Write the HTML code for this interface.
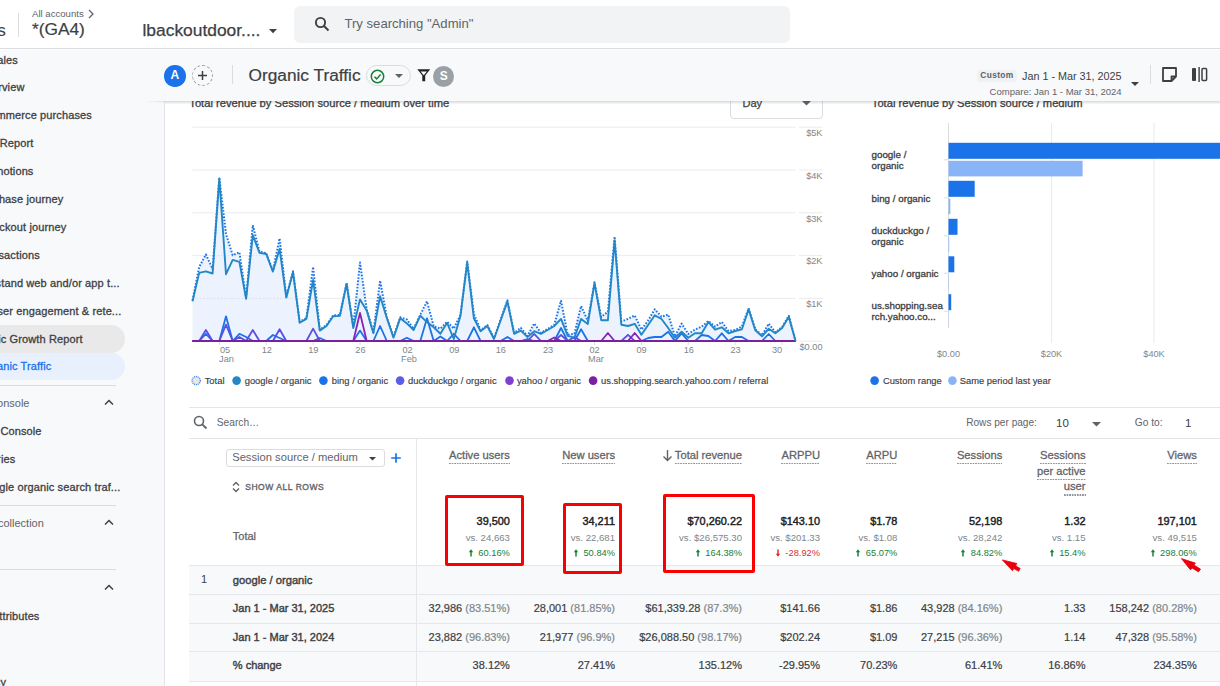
<!DOCTYPE html>
<html><head><meta charset="utf-8"><title>GA4 Organic Traffic</title><style>
*{margin:0;padding:0;box-sizing:border-box}
body{width:1220px;height:686px;overflow:hidden;background:#fff;font-family:"Liberation Sans",sans-serif;color:#3c4043;position:relative}
.a{position:absolute;white-space:nowrap}
.r{text-align:right}
</style></head>
<body>
<div class="a" style="left:0;top:0;width:1220px;height:49px;background:#fff;border-bottom:1px solid #dadce0"></div>
<div class="a" style="right:1214.2px;top:17.5px;font-size:17.3px;line-height:24px;color:#3c4043;font-weight:400;">Analytics</div>
<div class="a" style="left:18px;top:13px;width:1px;height:24px;background:#dadce0"></div>
<div class="a" style="left:32px;top:7.0px;font-size:9.6px;line-height:13px;color:#5f6368;font-weight:400;">All accounts</div>
<svg class="a" style="left:87px;top:9px" width="8" height="10" viewBox="0 0 8 10"><path d="M2 1 L6 5 L2 9" fill="none" stroke="#5f6368" stroke-width="1.3"/></svg>
<div class="a" style="left:32px;top:17.3px;font-size:17.3px;line-height:24px;color:#3c4043;font-weight:400;-webkit-text-stroke-width:0.2px">*(GA4)</div>
<div class="a" style="left:142.5px;top:17.8px;font-size:17.4px;line-height:24px;color:#3c4043;font-weight:400;-webkit-text-stroke-width:0.25px">lbackoutdoor....</div>
<svg class="a" style="left:268.5px;top:29.2px" width="8" height="5" viewBox="0 0 8 5"><path d="M0 0 L8 0 L4 4.3 Z" fill="#3c4043"/></svg>
<div class="a" style="left:294px;top:6px;width:496px;height:37px;background:#f1f3f4;border-radius:6px"></div>
<svg class="a" style="left:314px;top:16px" width="16" height="16" viewBox="0 0 16 16"><circle cx="6.5" cy="6.5" r="4.6" fill="none" stroke="#3c4043" stroke-width="1.9"/><path d="M10 10 L14.5 14.5" stroke="#3c4043" stroke-width="2"/></svg>
<div class="a" style="left:344.5px;top:14.5px;font-size:13.1px;line-height:18px;color:#5f6368;font-weight:400;">Try searching "Admin"</div>
<div class="a" style="left:0;top:50px;width:165px;height:636px;background:#f8f9fa"></div><div class="a" style="left:164px;top:101px;width:1px;height:585px;background:#e3e5e8"></div>
<div class="a" style="left:-40px;top:325px;width:165px;height:27.5px;background:#e9e9ea;border-radius:0 14px 14px 0"></div>
<div class="a" style="left:-40px;top:352.5px;width:165px;height:27.5px;background:#e8f0fe;border-radius:0 14px 14px 0"></div>
<div class="a" style="left:0;top:50px;width:164px;height:636px;overflow:hidden"><div class="a" style="left:0;top:-50px;width:1220px;height:686px"><div class="a" style="right:1202.1px;top:52.8px;font-size:11px;line-height:15px;color:#3c4043;font-weight:400;-webkit-text-stroke-width:0.3px;letter-spacing:0.12px">Ecommerce sales</div><div class="a" style="right:1195.5px;top:80.2px;font-size:11px;line-height:15px;color:#3c4043;font-weight:400;-webkit-text-stroke-width:0.3px;letter-spacing:0.12px">Overview</div><div class="a" style="right:1128.1px;top:108.0px;font-size:11px;line-height:15px;color:#3c4043;font-weight:400;-webkit-text-stroke-width:0.3px;letter-spacing:0.12px">Ecommerce purchases</div><div class="a" style="right:1186.5px;top:136.0px;font-size:11px;line-height:15px;color:#3c4043;font-weight:400;-webkit-text-stroke-width:0.3px;letter-spacing:0.12px">Item Report</div><div class="a" style="right:1186.5px;top:164.0px;font-size:11px;line-height:15px;color:#3c4043;font-weight:400;-webkit-text-stroke-width:0.3px;letter-spacing:0.12px">Promotions</div><div class="a" style="right:1156.7px;top:192.1px;font-size:11px;line-height:15px;color:#3c4043;font-weight:400;-webkit-text-stroke-width:0.3px;letter-spacing:0.12px">Purchase journey</div><div class="a" style="right:1153.7px;top:219.9px;font-size:11px;line-height:15px;color:#3c4043;font-weight:400;-webkit-text-stroke-width:0.3px;letter-spacing:0.12px">Checkout journey</div><div class="a" style="right:1180.2px;top:247.7px;font-size:11px;line-height:15px;color:#3c4043;font-weight:400;-webkit-text-stroke-width:0.3px;letter-spacing:0.12px">Transactions</div><div class="a" style="right:1100.3px;top:275.7px;font-size:11px;line-height:15px;color:#3c4043;font-weight:400;-webkit-text-stroke-width:0.3px;letter-spacing:0.12px">Understand web and/or app t...</div><div class="a" style="right:1098.6px;top:303.7px;font-size:11px;line-height:15px;color:#3c4043;font-weight:400;-webkit-text-stroke-width:0.3px;letter-spacing:0.12px">Understand user engagement &amp; rete...</div><div class="a" style="right:1137.3px;top:331.7px;font-size:11px;line-height:15px;color:#3c4043;font-weight:400;-webkit-text-stroke-width:0.3px;letter-spacing:0.12px">Organic Growth Report</div><div class="a" style="right:1168.6px;top:359.1px;font-size:11px;line-height:15px;color:#1a73e8;font-weight:400;-webkit-text-stroke-width:0.3px;letter-spacing:0.12px">Organic Traffic</div><div class="a" style="right:1178.4px;top:423.6px;font-size:11px;line-height:15px;color:#3c4043;font-weight:400;-webkit-text-stroke-width:0.3px;letter-spacing:0.12px">Search Console</div><div class="a" style="right:1204.7px;top:451.8px;font-size:11px;line-height:15px;color:#3c4043;font-weight:400;-webkit-text-stroke-width:0.3px;letter-spacing:0.12px">Queries</div><div class="a" style="right:1099.6px;top:479.5px;font-size:11px;line-height:15px;color:#3c4043;font-weight:400;-webkit-text-stroke-width:0.3px;letter-spacing:0.12px">Google organic search traf...</div><div class="a" style="right:1180.5px;top:608.5px;font-size:11px;line-height:15px;color:#3c4043;font-weight:400;-webkit-text-stroke-width:0.3px;letter-spacing:0.12px">Attributes</div><div class="a" style="right:1214.0px;top:674.5px;font-size:11px;line-height:15px;color:#3c4043;font-weight:400;-webkit-text-stroke-width:0.3px;letter-spacing:0.12px">Privacy</div><div class="a" style="right:1190.5px;top:395.8px;font-size:11px;line-height:15px;color:#5f6368;font-weight:400;">Search Console</div><div class="a" style="right:1176.2px;top:515.7px;font-size:11px;line-height:15px;color:#5f6368;font-weight:400;">Data collection</div></div></div>
<div class="a" style="left:0;top:384.5px;width:115.5px;height:1px;background:#dadce0"></div>
<div class="a" style="left:0;top:504.5px;width:115.5px;height:1px;background:#dadce0"></div>
<div class="a" style="left:0;top:569.0px;width:115.5px;height:1px;background:#dadce0"></div>
<svg class="a" style="left:104px;top:399.3px" width="10" height="7" viewBox="0 0 10 7"><path d="M1 5.5 L5 1.5 L9 5.5" fill="none" stroke="#3c4043" stroke-width="1.5"/></svg>
<svg class="a" style="left:104px;top:519.2px" width="10" height="7" viewBox="0 0 10 7"><path d="M1 5.5 L5 1.5 L9 5.5" fill="none" stroke="#3c4043" stroke-width="1.5"/></svg>
<svg class="a" style="left:104px;top:583.5px" width="10" height="7" viewBox="0 0 10 7"><path d="M1 5.5 L5 1.5 L9 5.5" fill="none" stroke="#3c4043" stroke-width="1.5"/></svg>
<div class="a" style="left:189.3px;top:95.2px;font-size:11.2px;line-height:16px;color:#3c4043;font-weight:400;-webkit-text-stroke-width:0.3px">Total revenue by Session source / medium over time</div>
<div class="a" style="left:871.8px;top:95.2px;font-size:11.2px;line-height:16px;color:#3c4043;font-weight:400;-webkit-text-stroke-width:0.3px">Total revenue by Session source / medium</div>
<div class="a" style="left:730px;top:88px;width:92.5px;height:30.5px;border:1px solid #dadce0;border-radius:4px;background:#fff"></div>
<div class="a" style="left:742.5px;top:95.8px;font-size:11px;line-height:15px;color:#3c4043;font-weight:400;-webkit-text-stroke-width:0.25px">Day</div>
<svg class="a" style="left:802px;top:101px" width="9" height="5" viewBox="0 0 9 5"><path d="M0 0 L9 0 L4.5 4.5 Z" fill="#5f6368"/></svg>
<svg class="a" style="left:0;top:0" width="1220" height="686" viewBox="0 0 1220 686"><line x1="799" y1="127.2" x2="822.5" y2="127.2" stroke="#ebebeb" stroke-width="1"/><line x1="192.5" y1="127.2" x2="795.5" y2="127.2" stroke="#ebebeb" stroke-width="1"/><line x1="799" y1="170" x2="822.5" y2="170" stroke="#ebebeb" stroke-width="1"/><line x1="192.5" y1="170" x2="795.5" y2="170" stroke="#ebebeb" stroke-width="1"/><line x1="799" y1="212.8" x2="822.5" y2="212.8" stroke="#ebebeb" stroke-width="1"/><line x1="192.5" y1="212.8" x2="795.5" y2="212.8" stroke="#ebebeb" stroke-width="1"/><line x1="799" y1="255.6" x2="822.5" y2="255.6" stroke="#ebebeb" stroke-width="1"/><line x1="192.5" y1="255.6" x2="795.5" y2="255.6" stroke="#ebebeb" stroke-width="1"/><line x1="799" y1="298.4" x2="822.5" y2="298.4" stroke="#ebebeb" stroke-width="1"/><line x1="192.5" y1="298.4" x2="795.5" y2="298.4" stroke="#ebebeb" stroke-width="1"/><line x1="799" y1="341.2" x2="822.5" y2="341.2" stroke="#ebebeb" stroke-width="1"/><polygon points="192.5,341.0 192.5,300.4 199.2,267.0 205.9,254.5 212.6,269.0 219.3,177.5 226.0,234.0 232.7,255.3 239.4,252.2 246.1,297.8 252.8,225.2 259.5,251.8 266.2,253.0 272.9,270.6 279.6,238.4 286.3,296.5 293.0,271.2 299.7,321.8 306.4,317.9 313.1,267.0 319.8,329.6 326.5,325.0 333.2,315.3 339.9,314.9 346.6,282.9 353.3,327.0 360.0,262.5 366.7,309.5 373.4,332.2 380.1,280.6 386.8,317.0 393.5,336.7 400.2,317.3 406.9,319.5 413.6,329.0 420.3,314.7 427.0,301.4 433.7,326.3 440.4,328.6 447.1,321.8 453.8,328.6 460.5,314.7 467.2,261.5 473.9,314.0 480.6,330.2 487.3,325.0 494.0,338.0 500.7,319.2 507.4,300.4 514.1,332.8 520.8,327.9 527.5,336.0 534.2,323.4 540.9,332.8 547.6,329.0 554.3,324.7 561.0,300.7 567.7,334.8 574.4,333.8 581.1,306.0 587.8,320.9 594.5,282.2 601.2,317.0 607.9,311.8 614.6,236.6 621.3,321.5 628.0,318.9 634.7,315.5 641.4,329.6 648.1,320.6 654.8,309.3 661.5,316.8 668.2,314.6 674.9,336.3 681.6,323.6 688.3,334.0 695.0,329.6 701.7,326.6 708.4,321.0 715.1,326.6 721.8,322.0 728.5,331.0 735.2,330.0 741.9,326.6 748.6,308.3 755.3,329.3 762.0,335.3 768.7,323.6 775.4,332.3 782.1,327.0 788.8,315.8 795.5,340.8 795.5,341.0" fill="#ecf3fe"/><clipPath id="fc"><polygon points="192.5,341.0 192.5,300.4 199.2,267.0 205.9,254.5 212.6,269.0 219.3,177.5 226.0,234.0 232.7,255.3 239.4,252.2 246.1,297.8 252.8,225.2 259.5,251.8 266.2,253.0 272.9,270.6 279.6,238.4 286.3,296.5 293.0,271.2 299.7,321.8 306.4,317.9 313.1,267.0 319.8,329.6 326.5,325.0 333.2,315.3 339.9,314.9 346.6,282.9 353.3,327.0 360.0,262.5 366.7,309.5 373.4,332.2 380.1,280.6 386.8,317.0 393.5,336.7 400.2,317.3 406.9,319.5 413.6,329.0 420.3,314.7 427.0,301.4 433.7,326.3 440.4,328.6 447.1,321.8 453.8,328.6 460.5,314.7 467.2,261.5 473.9,314.0 480.6,330.2 487.3,325.0 494.0,338.0 500.7,319.2 507.4,300.4 514.1,332.8 520.8,327.9 527.5,336.0 534.2,323.4 540.9,332.8 547.6,329.0 554.3,324.7 561.0,300.7 567.7,334.8 574.4,333.8 581.1,306.0 587.8,320.9 594.5,282.2 601.2,317.0 607.9,311.8 614.6,236.6 621.3,321.5 628.0,318.9 634.7,315.5 641.4,329.6 648.1,320.6 654.8,309.3 661.5,316.8 668.2,314.6 674.9,336.3 681.6,323.6 688.3,334.0 695.0,329.6 701.7,326.6 708.4,321.0 715.1,326.6 721.8,322.0 728.5,331.0 735.2,330.0 741.9,326.6 748.6,308.3 755.3,329.3 762.0,335.3 768.7,323.6 775.4,332.3 782.1,327.0 788.8,315.8 795.5,340.8 795.5,341.0"/></clipPath><g clip-path="url(#fc)"><line x1="192.5" y1="127.2" x2="795.5" y2="127.2" stroke="#d5d9e0" stroke-width="1" opacity="0.7" stroke-dasharray="2 1.5"/><line x1="192.5" y1="170" x2="795.5" y2="170" stroke="#d5d9e0" stroke-width="1" opacity="0.7" stroke-dasharray="2 1.5"/><line x1="192.5" y1="212.8" x2="795.5" y2="212.8" stroke="#d5d9e0" stroke-width="1" opacity="0.7" stroke-dasharray="2 1.5"/><line x1="192.5" y1="255.6" x2="795.5" y2="255.6" stroke="#d5d9e0" stroke-width="1" opacity="0.7" stroke-dasharray="2 1.5"/><line x1="192.5" y1="298.4" x2="795.5" y2="298.4" stroke="#d5d9e0" stroke-width="1" opacity="0.7" stroke-dasharray="2 1.5"/></g><polyline points="192.5,341.0 199.2,341.0 205.9,333.8 212.6,341.0 219.3,341.0 226.0,316.3 232.7,341.0 239.4,333.8 246.1,337.0 252.8,341.0 259.5,341.0 266.2,341.0 272.9,335.0 279.6,338.0 286.3,341.0 293.0,341.0 299.7,341.0 306.4,341.0 313.1,341.0 319.8,338.0 326.5,341.0 333.2,341.0 339.9,341.0 346.6,341.0 353.3,341.0 360.0,330.6 366.7,341.0 373.4,341.0 380.1,326.0 386.8,341.0 393.5,341.0 400.2,341.0 406.9,337.7 413.6,341.0 420.3,341.0 427.0,318.3 433.7,341.0 440.4,336.4 447.1,341.0 453.8,333.8 460.5,341.0 467.2,341.0 473.9,327.3 480.6,341.0 487.3,341.0 494.0,341.0 500.7,341.0 507.4,337.0 514.1,341.0 520.8,341.0 527.5,339.0 534.2,341.0 540.9,341.0 547.6,341.0 554.3,341.0 561.0,328.0 567.7,341.0 574.4,341.0 581.1,329.3 587.8,341.0 594.5,341.0 601.2,341.0 607.9,341.0 614.6,341.0 621.3,341.0 628.0,341.0 634.7,341.0 641.4,341.0 648.1,338.0 654.8,337.0 661.5,337.0 668.2,331.8 674.9,341.0 681.6,333.3 688.3,341.0 695.0,341.0 701.7,335.0 708.4,336.0 715.1,341.0 721.8,333.3 728.5,341.0 735.2,337.0 741.9,337.0 748.6,341.0 755.3,341.0 762.0,341.0 768.7,334.0 775.4,341.0 782.1,341.0 788.8,341.0 795.5,341.0" fill="none" stroke="#1a73e8" stroke-width="1.8" stroke-linejoin="round"/><polyline points="192.5,341.0 199.2,341.0 205.9,330.0 212.6,341.0 219.3,341.0 226.0,324.7 232.7,341.0 239.4,337.0 246.1,341.0 252.8,330.0 259.5,341.0 266.2,341.0 272.9,341.0 279.6,329.3 286.3,341.0 293.0,341.0 299.7,341.0 306.4,341.0 313.1,328.6 319.8,341.0 326.5,341.0 333.2,341.0 339.9,341.0 346.6,341.0 353.3,341.0 360.0,341.0 366.7,341.0 373.4,341.0 380.1,341.0 386.8,341.0 393.5,341.0 400.2,341.0 406.9,341.0 413.6,341.0 420.3,341.0 427.0,341.0 433.7,341.0 440.4,341.0 447.1,341.0 453.8,341.0 460.5,341.0 467.2,341.0 473.9,341.0 480.6,341.0 487.3,341.0 494.0,341.0 500.7,341.0 507.4,341.0 514.1,341.0 520.8,341.0 527.5,341.0 534.2,333.8 540.9,341.0 547.6,341.0 554.3,341.0 561.0,335.0 567.7,341.0 574.4,337.0 581.1,341.0 587.8,341.0 594.5,341.0 601.2,341.0 607.9,341.0 614.6,341.0 621.3,341.0 628.0,334.8 634.7,341.0 641.4,341.0 648.1,341.0 654.8,341.0 661.5,341.0 668.2,341.0 674.9,341.0 681.6,341.0 688.3,341.0 695.0,341.0 701.7,341.0 708.4,341.0 715.1,341.0 721.8,341.0 728.5,341.0 735.2,341.0 741.9,341.0 748.6,341.0 755.3,341.0 762.0,341.0 768.7,341.0 775.4,341.0 782.1,341.0 788.8,341.0 795.5,341.0" fill="none" stroke="#5b4fe3" stroke-width="1.8" stroke-linejoin="round"/><polyline points="192.5,341.0 199.2,341.0 205.9,341.0 212.6,341.0 219.3,341.0 226.0,341.0 232.7,341.0 239.4,341.0 246.1,341.0 252.8,341.0 259.5,341.0 266.2,341.0 272.9,341.0 279.6,341.0 286.3,341.0 293.0,341.0 299.7,341.0 306.4,341.0 313.1,341.0 319.8,341.0 326.5,341.0 333.2,341.0 339.9,341.0 346.6,341.0 353.3,341.0 360.0,313.0 366.7,341.0 373.4,341.0 380.1,341.0 386.8,341.0 393.5,341.0 400.2,341.0 406.9,341.0 413.6,341.0 420.3,341.0 427.0,341.0 433.7,341.0 440.4,341.0 447.1,341.0 453.8,341.0 460.5,341.0 467.2,341.0 473.9,341.0 480.6,341.0 487.3,341.0 494.0,341.0 500.7,341.0 507.4,341.0 514.1,341.0 520.8,341.0 527.5,341.0 534.2,341.0 540.9,341.0 547.6,341.0 554.3,337.5 561.0,341.0 567.7,341.0 574.4,341.0 581.1,341.0 587.8,341.0 594.5,341.0 601.2,341.0 607.9,333.0 614.6,341.0 621.3,341.0 628.0,341.0 634.7,333.0 641.4,341.0 648.1,341.0 654.8,341.0 661.5,341.0 668.2,341.0 674.9,341.0 681.6,341.0 688.3,341.0 695.0,341.0 701.7,341.0 708.4,341.0 715.1,341.0 721.8,341.0 728.5,341.0 735.2,341.0 741.9,341.0 748.6,341.0 755.3,341.0 762.0,341.0 768.7,341.0 775.4,341.0 782.1,341.0 788.8,341.0 795.5,341.0" fill="none" stroke="#8a22b5" stroke-width="1.8" stroke-linejoin="round"/><line x1="192.5" y1="341.0" x2="795.5" y2="341.0" stroke="#7b1fa2" stroke-width="2"/><polyline points="192.5,300.4 199.2,267.0 205.9,254.5 212.6,269.0 219.3,177.5 226.0,234.0 232.7,255.3 239.4,252.2 246.1,297.8 252.8,225.2 259.5,251.8 266.2,253.0 272.9,270.6 279.6,238.4 286.3,296.5 293.0,271.2 299.7,321.8 306.4,317.9 313.1,267.0 319.8,329.6 326.5,325.0 333.2,315.3 339.9,314.9 346.6,282.9 353.3,327.0 360.0,262.5 366.7,309.5 373.4,332.2 380.1,280.6 386.8,317.0 393.5,336.7 400.2,317.3 406.9,319.5 413.6,329.0 420.3,314.7 427.0,301.4 433.7,326.3 440.4,328.6 447.1,321.8 453.8,328.6 460.5,314.7 467.2,261.5 473.9,314.0 480.6,330.2 487.3,325.0 494.0,338.0 500.7,319.2 507.4,300.4 514.1,332.8 520.8,327.9 527.5,336.0 534.2,323.4 540.9,332.8 547.6,329.0 554.3,324.7 561.0,300.7 567.7,334.8 574.4,333.8 581.1,306.0 587.8,320.9 594.5,282.2 601.2,317.0 607.9,311.8 614.6,236.6 621.3,321.5 628.0,318.9 634.7,315.5 641.4,329.6 648.1,320.6 654.8,309.3 661.5,316.8 668.2,314.6 674.9,336.3 681.6,323.6 688.3,334.0 695.0,329.6 701.7,326.6 708.4,321.0 715.1,326.6 721.8,322.0 728.5,331.0 735.2,330.0 741.9,326.6 748.6,308.3 755.3,329.3 762.0,335.3 768.7,323.6 775.4,332.3 782.1,327.0 788.8,315.8 795.5,340.8" fill="none" stroke="#1a73e8" stroke-width="2" stroke-dasharray="1.6 1.6" stroke-linejoin="round"/><polyline points="192.5,301.4 199.2,272.9 205.9,271.3 212.6,273.5 219.3,178.5 226.0,274.2 232.7,259.9 239.4,261.8 246.1,298.8 252.8,235.2 259.5,252.8 266.2,254.0 272.9,271.6 279.6,249.0 286.3,297.5 293.0,272.2 299.7,322.8 306.4,318.9 313.1,280.0 319.8,330.6 326.5,326.0 333.2,316.3 339.9,315.9 346.6,283.9 353.3,328.0 360.0,299.4 366.7,310.5 373.4,333.2 380.1,296.2 386.8,318.0 393.5,337.7 400.2,318.3 406.9,323.4 413.6,330.0 420.3,315.7 427.0,322.1 433.7,327.3 440.4,333.8 447.1,322.8 453.8,339.0 460.5,315.7 467.2,262.5 473.9,318.3 480.6,331.2 487.3,326.0 494.0,339.0 500.7,320.2 507.4,301.4 514.1,333.8 520.8,330.6 527.5,337.0 534.2,331.2 540.9,333.8 547.6,330.0 554.3,326.0 561.0,318.9 567.7,335.8 574.4,337.7 581.1,318.9 587.8,324.1 594.5,283.2 601.2,320.2 607.9,320.2 614.6,240.5 621.3,324.7 628.0,326.0 634.7,323.8 641.4,334.8 648.1,325.0 654.8,315.3 661.5,319.0 668.2,328.0 674.9,337.8 681.6,331.8 688.3,337.8 695.0,333.3 701.7,333.3 708.4,322.0 715.1,329.6 721.8,327.3 728.5,333.3 735.2,331.0 741.9,329.3 748.6,309.3 755.3,330.3 762.0,336.3 768.7,328.8 775.4,333.3 782.1,328.0 788.8,316.8 795.5,340.8" fill="none" stroke="#2387c5" stroke-width="1.9" stroke-linejoin="round"/><line x1="219.3" y1="342" x2="219.3" y2="345" stroke="#dadce0" stroke-width="1"/><line x1="266.2" y1="342" x2="266.2" y2="345" stroke="#dadce0" stroke-width="1"/><line x1="313.1" y1="342" x2="313.1" y2="345" stroke="#dadce0" stroke-width="1"/><line x1="360.0" y1="342" x2="360.0" y2="345" stroke="#dadce0" stroke-width="1"/><line x1="406.9" y1="342" x2="406.9" y2="345" stroke="#dadce0" stroke-width="1"/><line x1="453.8" y1="342" x2="453.8" y2="345" stroke="#dadce0" stroke-width="1"/><line x1="500.7" y1="342" x2="500.7" y2="345" stroke="#dadce0" stroke-width="1"/><line x1="547.6" y1="342" x2="547.6" y2="345" stroke="#dadce0" stroke-width="1"/><line x1="594.5" y1="342" x2="594.5" y2="345" stroke="#dadce0" stroke-width="1"/><line x1="641.4" y1="342" x2="641.4" y2="345" stroke="#dadce0" stroke-width="1"/><line x1="688.3" y1="342" x2="688.3" y2="345" stroke="#dadce0" stroke-width="1"/><line x1="735.2" y1="342" x2="735.2" y2="345" stroke="#dadce0" stroke-width="1"/><line x1="782.1" y1="342" x2="782.1" y2="345" stroke="#dadce0" stroke-width="1"/><line x1="948.5" y1="123" x2="948.5" y2="328" stroke="#dadce0" stroke-width="1"/><line x1="1051.5" y1="123" x2="1051.5" y2="343" stroke="#e8eaed" stroke-width="1"/><line x1="1154" y1="123" x2="1154" y2="343" stroke="#e8eaed" stroke-width="1"/><rect x="948.5" y="142.8" width="281.5" height="16" fill="#1a73e8"/><rect x="948.5" y="160.8" width="134.1" height="15.6" fill="#8ab4f8"/><line x1="944" y1="159.8" x2="948.5" y2="159.8" stroke="#dadce0" stroke-width="1"/><rect x="948.5" y="180.8" width="26.2" height="16" fill="#1a73e8"/><rect x="948.5" y="198.6" width="1.8" height="15.6" fill="#8ab4f8"/><line x1="944" y1="197.8" x2="948.5" y2="197.8" stroke="#dadce0" stroke-width="1"/><rect x="948.5" y="218.8" width="9.0" height="16" fill="#1a73e8"/><rect x="948.5" y="236.6" width="0.7" height="15.6" fill="#8ab4f8"/><line x1="944" y1="235.8" x2="948.5" y2="235.8" stroke="#dadce0" stroke-width="1"/><rect x="948.5" y="256.3" width="5.8" height="16" fill="#1a73e8"/><rect x="948.5" y="274.3" width="0.4" height="15.6" fill="#8ab4f8"/><line x1="944" y1="273.3" x2="948.5" y2="273.3" stroke="#dadce0" stroke-width="1"/><rect x="948.5" y="294.2" width="2.7" height="16" fill="#1a73e8"/><rect x="948.5" y="312.2" width="0.2" height="15.6" fill="#8ab4f8"/><line x1="944" y1="311.2" x2="948.5" y2="311.2" stroke="#dadce0" stroke-width="1"/><circle cx="196.2" cy="380.6" r="4.1" fill="#e6e7e9" stroke="#3d84ec" stroke-width="1.3" stroke-dasharray="1 0.85"/><circle cx="236.6" cy="380.6" r="4.3" fill="#2387c5"/><circle cx="323.4" cy="380.6" r="4.3" fill="#1a73e8"/><circle cx="400.1" cy="380.6" r="4.3" fill="#5c5ce6"/><circle cx="509.5" cy="380.6" r="4.3" fill="#7f3fd0"/><circle cx="593.1" cy="380.6" r="4.3" fill="#7b1fa2"/><circle cx="874.6" cy="380.6" r="4.3" fill="#1a73e8"/><circle cx="952.4" cy="380.6" r="4.3" fill="#8ab4f8"/></svg>
<div class="a" style="right:397.5px;top:127.0px;font-size:9.2px;line-height:13px;color:#80868b;font-weight:400;">$5K</div>
<div class="a" style="right:397.5px;top:169.8px;font-size:9.2px;line-height:13px;color:#80868b;font-weight:400;">$4K</div>
<div class="a" style="right:397.5px;top:212.6px;font-size:9.2px;line-height:13px;color:#80868b;font-weight:400;">$3K</div>
<div class="a" style="right:397.5px;top:255.4px;font-size:9.2px;line-height:13px;color:#80868b;font-weight:400;">$2K</div>
<div class="a" style="right:397.5px;top:298.2px;font-size:9.2px;line-height:13px;color:#80868b;font-weight:400;">$1K</div>
<div class="a" style="right:397.5px;top:340.5px;font-size:9.2px;line-height:13px;color:#80868b;font-weight:400;">$0.00</div>
<div class="a" style="left:125.0px;width:200px;text-align:center;top:343.7px;font-size:9.2px;line-height:13px;color:#80868b;font-weight:400;">05</div>
<div class="a" style="left:126.5px;width:200px;text-align:center;top:353.0px;font-size:9.2px;line-height:13px;color:#80868b;font-weight:400;">Jan</div>
<div class="a" style="left:166.8px;width:200px;text-align:center;top:343.7px;font-size:9.2px;line-height:13px;color:#80868b;font-weight:400;">12</div>
<div class="a" style="left:213.3px;width:200px;text-align:center;top:343.7px;font-size:9.2px;line-height:13px;color:#80868b;font-weight:400;">19</div>
<div class="a" style="left:260.4px;width:200px;text-align:center;top:343.7px;font-size:9.2px;line-height:13px;color:#80868b;font-weight:400;">26</div>
<div class="a" style="left:307.5px;width:200px;text-align:center;top:343.7px;font-size:9.2px;line-height:13px;color:#80868b;font-weight:400;">02</div>
<div class="a" style="left:309.0px;width:200px;text-align:center;top:353.0px;font-size:9.2px;line-height:13px;color:#80868b;font-weight:400;">Feb</div>
<div class="a" style="left:354.3px;width:200px;text-align:center;top:343.7px;font-size:9.2px;line-height:13px;color:#80868b;font-weight:400;">09</div>
<div class="a" style="left:400.8px;width:200px;text-align:center;top:343.7px;font-size:9.2px;line-height:13px;color:#80868b;font-weight:400;">16</div>
<div class="a" style="left:448.0px;width:200px;text-align:center;top:343.7px;font-size:9.2px;line-height:13px;color:#80868b;font-weight:400;">23</div>
<div class="a" style="left:494.5px;width:200px;text-align:center;top:343.7px;font-size:9.2px;line-height:13px;color:#80868b;font-weight:400;">02</div>
<div class="a" style="left:496.0px;width:200px;text-align:center;top:353.0px;font-size:9.2px;line-height:13px;color:#80868b;font-weight:400;">Mar</div>
<div class="a" style="left:541.5px;width:200px;text-align:center;top:343.7px;font-size:9.2px;line-height:13px;color:#80868b;font-weight:400;">09</div>
<div class="a" style="left:588.8px;width:200px;text-align:center;top:343.7px;font-size:9.2px;line-height:13px;color:#80868b;font-weight:400;">16</div>
<div class="a" style="left:635.6px;width:200px;text-align:center;top:343.7px;font-size:9.2px;line-height:13px;color:#80868b;font-weight:400;">23</div>
<div class="a" style="left:677.0px;width:200px;text-align:center;top:343.7px;font-size:9.2px;line-height:13px;color:#80868b;font-weight:400;">30</div>
<div class="a" style="left:204.7px;top:374.1px;font-size:9.4px;line-height:13px;color:#3c4043;font-weight:400;-webkit-text-stroke-width:0.15px">Total</div>
<div class="a" style="left:244.7px;top:374.1px;font-size:9.4px;line-height:13px;color:#3c4043;font-weight:400;-webkit-text-stroke-width:0.15px">google / organic</div>
<div class="a" style="left:331.8px;top:374.1px;font-size:9.4px;line-height:13px;color:#3c4043;font-weight:400;-webkit-text-stroke-width:0.15px">bing / organic</div>
<div class="a" style="left:408px;top:374.1px;font-size:9.4px;line-height:13px;color:#3c4043;font-weight:400;-webkit-text-stroke-width:0.15px">duckduckgo / organic</div>
<div class="a" style="left:516.9px;top:374.1px;font-size:9.4px;line-height:13px;color:#3c4043;font-weight:400;-webkit-text-stroke-width:0.15px">yahoo / organic</div>
<div class="a" style="left:601px;top:374.1px;font-size:9.4px;line-height:13px;color:#3c4043;font-weight:400;-webkit-text-stroke-width:0.15px">us.shopping.search.yahoo.com / referral</div>
<div class="a" style="left:882.9px;top:374.1px;font-size:9.4px;line-height:13px;color:#3c4043;font-weight:400;-webkit-text-stroke-width:0.15px">Custom range</div>
<div class="a" style="left:959.7px;top:374.1px;font-size:9.4px;line-height:13px;color:#3c4043;font-weight:400;-webkit-text-stroke-width:0.15px">Same period last year</div>
<div class="a" style="left:871.5px;top:148.2px;font-size:9.8px;line-height:14px;color:#3c4043;font-weight:400;-webkit-text-stroke-width:0.3px">google /</div>
<div class="a" style="left:871.5px;top:158.8px;font-size:9.8px;line-height:14px;color:#3c4043;font-weight:400;-webkit-text-stroke-width:0.3px">organic</div>
<div class="a" style="left:871.5px;top:191.6px;font-size:9.8px;line-height:14px;color:#3c4043;font-weight:400;-webkit-text-stroke-width:0.3px">bing / organic</div>
<div class="a" style="left:871.5px;top:224.3px;font-size:9.8px;line-height:14px;color:#3c4043;font-weight:400;-webkit-text-stroke-width:0.3px">duckduckgo /</div>
<div class="a" style="left:871.5px;top:234.9px;font-size:9.8px;line-height:14px;color:#3c4043;font-weight:400;-webkit-text-stroke-width:0.3px">organic</div>
<div class="a" style="left:871.5px;top:267.0px;font-size:9.8px;line-height:14px;color:#3c4043;font-weight:400;-webkit-text-stroke-width:0.3px">yahoo / organic</div>
<div class="a" style="left:871.5px;top:299.1px;font-size:9.8px;line-height:14px;color:#3c4043;font-weight:400;-webkit-text-stroke-width:0.3px">us.shopping.sea</div>
<div class="a" style="left:871.5px;top:309.7px;font-size:9.8px;line-height:14px;color:#3c4043;font-weight:400;-webkit-text-stroke-width:0.3px">rch.yahoo.co...</div>
<div class="a" style="left:848.5px;width:200px;text-align:center;top:347.8px;font-size:9.2px;line-height:13px;color:#80868b;font-weight:400;">$0.00</div>
<div class="a" style="left:951.5px;width:200px;text-align:center;top:347.8px;font-size:9.2px;line-height:13px;color:#80868b;font-weight:400;">$20K</div>
<div class="a" style="left:1054.0px;width:200px;text-align:center;top:347.8px;font-size:9.2px;line-height:13px;color:#80868b;font-weight:400;">$40K</div>
<div class="a" style="left:143px;top:50px;width:1077px;height:51px;background:#f8f9fa"></div>
<div class="a" style="left:165px;top:101px;width:1055px;height:2.5px;background:linear-gradient(180deg,rgba(60,64,67,0.2),rgba(60,64,67,0.03))"></div>
<div class="a" style="left:143px;top:101px;width:22px;height:2px;background:linear-gradient(90deg,rgba(248,249,250,1),rgba(248,249,250,0)),linear-gradient(180deg,rgba(60,64,67,0.16),rgba(60,64,67,0))"></div>
<div class="a" style="left:164px;top:65px;width:21.5px;height:21.5px;border-radius:50%;background:#1a73e8;color:#fff;font-size:12px;font-weight:700;line-height:21.5px;text-align:center">A</div>
<div class="a" style="left:192px;top:65.2px;width:21px;height:21px;border-radius:50%;border:1px dashed #9aa0a6"></div>
<svg class="a" style="left:198px;top:71px" width="9" height="9" viewBox="0 0 9 9"><path d="M4.5 0 V9 M0 4.5 H9" stroke="#3c4043" stroke-width="1.5"/></svg>
<div class="a" style="left:232px;top:65px;width:1px;height:19px;background:#dadce0"></div>
<div class="a" style="left:248.5px;top:62.9px;font-size:17.3px;line-height:24px;color:#3c4043;font-weight:400;-webkit-text-stroke-width:0.2px">Organic Traffic</div>
<div class="a" style="left:365.5px;top:65.3px;width:45.3px;height:21px;border-radius:11px;border:1px solid #dadce0"></div>
<svg class="a" style="left:370px;top:68.5px" width="15" height="15" viewBox="0 0 15 15"><circle cx="7.5" cy="7.5" r="6.2" fill="none" stroke="#188038" stroke-width="1.5"/><path d="M4.5 7.7 L6.7 9.9 L10.6 5.6" fill="none" stroke="#188038" stroke-width="1.5"/></svg>
<svg class="a" style="left:395px;top:74px" width="8" height="4" viewBox="0 0 8 4"><path d="M0 0 L8 0 L4 4 Z" fill="#5f6368"/></svg>
<svg class="a" style="left:416.5px;top:68.5px" width="14" height="13" viewBox="0 0 14 13"><path d="M0.3 0.3 H13.2 L8.2 6.6 V12.3 H5.3 V6.6 Z" fill="#202124"/><path d="M3.6 2.4 H9.9 L6.75 6.2 Z" fill="#f8f9fa"/></svg>
<div class="a" style="left:433.3px;top:65.5px;width:21px;height:21px;border-radius:50%;background:#9aa0a6;color:#fff;font-size:12px;font-weight:700;line-height:21px;text-align:center">S</div>
<div class="a" style="left:977px;top:69.8px;width:40px;height:11.8px;background:#eff1f3;border-radius:2px;font-size:8.4px;font-weight:700;color:#5f6368;letter-spacing:0.35px;line-height:11.8px;text-align:center">Custom</div>
<div class="a" style="left:1022px;top:69.0px;font-size:10.8px;line-height:15px;color:#3c4043;font-weight:400;">Jan 1 - Mar 31, 2025</div>
<div class="a" style="right:98.4px;top:84.8px;font-size:9.5px;line-height:13px;color:#5f6368;font-weight:400;">Compare: Jan 1 - Mar 31, 2024</div>
<svg class="a" style="left:1131px;top:82px" width="8" height="4" viewBox="0 0 8 4"><path d="M0 0 L8 0 L4 4 Z" fill="#3c4043"/></svg>
<div class="a" style="left:1149.5px;top:65px;width:1px;height:19px;background:#dadce0"></div>
<svg class="a" style="left:1161px;top:66px" width="17" height="17" viewBox="0 0 17 17"><path d="M2 2 H15 V10.5 L10.5 15 H2 Z M10.5 15 V10.5 H15" fill="none" stroke="#3c4043" stroke-width="1.8" stroke-linejoin="round"/></svg>
<svg class="a" style="left:1191px;top:66px" width="18" height="17" viewBox="0 0 18 17"><rect x="1" y="2" width="4" height="13" rx="1" fill="#3c4043"/><rect x="7.4" y="1" width="1.4" height="15" fill="#3c4043"/><rect x="11" y="2.6" width="4.6" height="11.8" rx="1" fill="none" stroke="#3c4043" stroke-width="1.5"/></svg>
<div class="a" style="left:188.5px;top:407px;width:1032px;height:1px;background:#e3e5e8"></div>
<svg class="a" style="left:193px;top:415px" width="15" height="15" viewBox="0 0 15 15"><circle cx="6" cy="6" r="4.5" fill="none" stroke="#5f6368" stroke-width="1.6"/><path d="M9.3 9.3 L13.5 13.5" stroke="#5f6368" stroke-width="1.8"/></svg>
<div class="a" style="left:216.8px;top:415.7px;font-size:10.2px;line-height:14px;color:#5f6368;font-weight:400;">Search…</div>
<div class="a" style="right:183.1px;top:415.8px;font-size:10.1px;line-height:14px;color:#5f6368;font-weight:400;">Rows per page:</div>
<div class="a" style="left:1056px;top:414.8px;font-size:11.5px;line-height:16px;color:#3c4043;font-weight:400;">10</div>
<svg class="a" style="left:1092px;top:422px" width="9" height="5" viewBox="0 0 9 5"><path d="M0 0 L9 0 L4.5 4.5 Z" fill="#5f6368"/></svg>
<div class="a" style="left:1134.8px;top:415.8px;font-size:10.2px;line-height:14px;color:#5f6368;font-weight:400;">Go to:</div>
<div class="a" style="left:1185px;top:414.8px;font-size:11.5px;line-height:16px;color:#3c4043;font-weight:400;">1</div>
<div class="a" style="left:188.5px;top:438px;width:1032px;height:1px;background:#e3e5e8"></div>
<div class="a" style="left:188.5px;top:566px;width:1032px;height:115px;background:#f8f9fa"></div>
<div class="a" style="left:188.5px;top:565.2px;width:1032px;height:1px;background:#e5e7ea"></div>
<div class="a" style="left:188.5px;top:594.0px;width:1032px;height:1px;background:#e5e7ea"></div>
<div class="a" style="left:188.5px;top:622.5px;width:1032px;height:1px;background:#e5e7ea"></div>
<div class="a" style="left:188.5px;top:651.2px;width:1032px;height:1px;background:#e5e7ea"></div>
<div class="a" style="left:188.5px;top:680.5px;width:1032px;height:1px;background:#e5e7ea"></div>
<div class="a" style="left:416.4px;top:438px;width:1px;height:248px;background:#e5e7ea"></div>
<div class="a" style="left:225.8px;top:449.4px;width:159.5px;height:17.6px;border:1px solid #dadce0;border-radius:3px;background:#fff"></div>
<div class="a" style="left:232.2px;top:449.4px;font-size:11.2px;line-height:16px;color:#5f6368;font-weight:400;">Session source / medium</div>
<svg class="a" style="left:368.5px;top:456.5px" width="7" height="4" viewBox="0 0 7 4"><path d="M0 0 L7 0 L3.5 3.5 Z" fill="#3c4043"/></svg>
<svg class="a" style="left:389.5px;top:451.5px" width="12" height="12" viewBox="0 0 12 12"><path d="M6 1.2 V10.8 M1.2 6 H10.8" stroke="#1a73e8" stroke-width="1.7"/></svg>
<svg class="a" style="left:231.5px;top:481px" width="8" height="12" viewBox="0 0 8 12"><path d="M1 4.5 L4 1.5 L7 4.5 M1 7.5 L4 10.5 L7 7.5" fill="none" stroke="#5f6368" stroke-width="1.4"/></svg>
<div class="a" style="left:245.2px;top:481.2px;font-size:8.5px;line-height:12px;color:#5f6368;font-weight:400;letter-spacing:0.55px;-webkit-text-stroke-width:0.35px">SHOW ALL ROWS</div>
<div class="a" style="left:232.8px;top:529.0px;font-size:11px;line-height:15px;color:#5f6368;font-weight:400;-webkit-text-stroke-width:0.25px">Total</div>
<div class="a" style="right:710.1px;top:447.2px;font-size:11.2px;line-height:16px;color:#5f6368;font-weight:400;-webkit-text-stroke-width:0.28px"><span style="padding-bottom:3.3px;background:linear-gradient(90deg,#8f959b 62%,transparent 62%) 0 100%/2.6px 1.6px repeat-x">Active users</span></div>
<div class="a" style="right:710.1px;top:513.7px;font-size:10.9px;line-height:15px;color:#202124;font-weight:400;-webkit-text-stroke-width:0.42px">39,500</div>
<div class="a" style="right:710.1px;top:531.0px;font-size:9.6px;line-height:13px;color:#80868b;font-weight:400;">vs. 24,663</div>
<div class="a" style="right:710.1px;top:546.7px;font-size:9.3px;line-height:13px;color:#188038;font-weight:400;"><svg width="6" height="8" viewBox="0 0 6 8" style="vertical-align:-1px;margin-right:4.5px"><path d="M3 7.6 V2.5" stroke="#188038" stroke-width="1.5"/><path d="M0.8 3.3 L3 0.3 L5.2 3.3 Z" fill="#188038"/></svg>60.16%</div>
<div class="a" style="right:710.1px;top:600.9px;font-size:11px;line-height:15px;color:#3c4043;font-weight:400;-webkit-text-stroke-width:0.2px">32,986 <span style='color:#80868b'>(83.51%)</span></div>
<div class="a" style="right:710.1px;top:629.5px;font-size:11px;line-height:15px;color:#3c4043;font-weight:400;-webkit-text-stroke-width:0.2px">23,882 <span style='color:#80868b'>(96.83%)</span></div>
<div class="a" style="right:710.1px;top:658.0px;font-size:11px;line-height:15px;color:#3c4043;font-weight:400;-webkit-text-stroke-width:0.2px">38.12%</div>
<div class="a" style="right:605.0px;top:447.2px;font-size:11.2px;line-height:16px;color:#5f6368;font-weight:400;-webkit-text-stroke-width:0.28px"><span style="padding-bottom:3.3px;background:linear-gradient(90deg,#8f959b 62%,transparent 62%) 0 100%/2.6px 1.6px repeat-x">New users</span></div>
<div class="a" style="right:605.0px;top:513.7px;font-size:10.9px;line-height:15px;color:#202124;font-weight:400;-webkit-text-stroke-width:0.42px">34,211</div>
<div class="a" style="right:605.0px;top:531.0px;font-size:9.6px;line-height:13px;color:#80868b;font-weight:400;">vs. 22,681</div>
<div class="a" style="right:605.0px;top:546.7px;font-size:9.3px;line-height:13px;color:#188038;font-weight:400;"><svg width="6" height="8" viewBox="0 0 6 8" style="vertical-align:-1px;margin-right:4.5px"><path d="M3 7.6 V2.5" stroke="#188038" stroke-width="1.5"/><path d="M0.8 3.3 L3 0.3 L5.2 3.3 Z" fill="#188038"/></svg>50.84%</div>
<div class="a" style="right:605.0px;top:600.9px;font-size:11px;line-height:15px;color:#3c4043;font-weight:400;-webkit-text-stroke-width:0.2px">28,001 <span style='color:#80868b'>(81.85%)</span></div>
<div class="a" style="right:605.0px;top:629.5px;font-size:11px;line-height:15px;color:#3c4043;font-weight:400;-webkit-text-stroke-width:0.2px">21,977 <span style='color:#80868b'>(96.9%)</span></div>
<div class="a" style="right:605.0px;top:658.0px;font-size:11px;line-height:15px;color:#3c4043;font-weight:400;-webkit-text-stroke-width:0.2px">27.41%</div>
<div class="a" style="right:478.0px;top:447.2px;font-size:11.2px;line-height:16px;color:#5f6368;font-weight:400;-webkit-text-stroke-width:0.28px"><span style="padding-bottom:3.3px;background:linear-gradient(90deg,#8f959b 62%,transparent 62%) 0 100%/2.6px 1.6px repeat-x">Total revenue</span></div>
<div class="a" style="right:478.0px;top:513.7px;font-size:10.9px;line-height:15px;color:#202124;font-weight:400;-webkit-text-stroke-width:0.42px">$70,260.22</div>
<div class="a" style="right:478.0px;top:531.0px;font-size:9.6px;line-height:13px;color:#80868b;font-weight:400;">vs. $26,575.30</div>
<div class="a" style="right:478.0px;top:546.7px;font-size:9.3px;line-height:13px;color:#188038;font-weight:400;"><svg width="6" height="8" viewBox="0 0 6 8" style="vertical-align:-1px;margin-right:4.5px"><path d="M3 7.6 V2.5" stroke="#188038" stroke-width="1.5"/><path d="M0.8 3.3 L3 0.3 L5.2 3.3 Z" fill="#188038"/></svg>164.38%</div>
<div class="a" style="right:478.0px;top:600.9px;font-size:11px;line-height:15px;color:#3c4043;font-weight:400;-webkit-text-stroke-width:0.2px">$61,339.28 <span style='color:#80868b'>(87.3%)</span></div>
<div class="a" style="right:478.0px;top:629.5px;font-size:11px;line-height:15px;color:#3c4043;font-weight:400;-webkit-text-stroke-width:0.2px">$26,088.50 <span style='color:#80868b'>(98.17%)</span></div>
<div class="a" style="right:478.0px;top:658.0px;font-size:11px;line-height:15px;color:#3c4043;font-weight:400;-webkit-text-stroke-width:0.2px">135.12%</div>
<div class="a" style="right:400.0px;top:447.2px;font-size:11.2px;line-height:16px;color:#5f6368;font-weight:400;-webkit-text-stroke-width:0.28px"><span style="padding-bottom:3.3px;background:linear-gradient(90deg,#8f959b 62%,transparent 62%) 0 100%/2.6px 1.6px repeat-x">ARPPU</span></div>
<div class="a" style="right:400.0px;top:513.7px;font-size:10.9px;line-height:15px;color:#202124;font-weight:400;-webkit-text-stroke-width:0.42px">$143.10</div>
<div class="a" style="right:400.0px;top:531.0px;font-size:9.6px;line-height:13px;color:#80868b;font-weight:400;">vs. $201.33</div>
<div class="a" style="right:400.0px;top:546.7px;font-size:9.3px;line-height:13px;color:#d93025;font-weight:400;"><svg width="6" height="8" viewBox="0 0 6 8" style="vertical-align:-1px;margin-right:4.5px"><path d="M3 0.4 V5.5" stroke="#d93025" stroke-width="1.5"/><path d="M0.8 4.7 L3 7.7 L5.2 4.7 Z" fill="#d93025"/></svg>-28.92%</div>
<div class="a" style="right:400.0px;top:600.9px;font-size:11px;line-height:15px;color:#3c4043;font-weight:400;-webkit-text-stroke-width:0.2px">$141.66</div>
<div class="a" style="right:400.0px;top:629.5px;font-size:11px;line-height:15px;color:#3c4043;font-weight:400;-webkit-text-stroke-width:0.2px">$202.24</div>
<div class="a" style="right:400.0px;top:658.0px;font-size:11px;line-height:15px;color:#3c4043;font-weight:400;-webkit-text-stroke-width:0.2px">-29.95%</div>
<div class="a" style="right:322.6px;top:447.2px;font-size:11.2px;line-height:16px;color:#5f6368;font-weight:400;-webkit-text-stroke-width:0.28px"><span style="padding-bottom:3.3px;background:linear-gradient(90deg,#8f959b 62%,transparent 62%) 0 100%/2.6px 1.6px repeat-x">ARPU</span></div>
<div class="a" style="right:322.6px;top:513.7px;font-size:10.9px;line-height:15px;color:#202124;font-weight:400;-webkit-text-stroke-width:0.42px">$1.78</div>
<div class="a" style="right:322.6px;top:531.0px;font-size:9.6px;line-height:13px;color:#80868b;font-weight:400;">vs. $1.08</div>
<div class="a" style="right:322.6px;top:546.7px;font-size:9.3px;line-height:13px;color:#188038;font-weight:400;"><svg width="6" height="8" viewBox="0 0 6 8" style="vertical-align:-1px;margin-right:4.5px"><path d="M3 7.6 V2.5" stroke="#188038" stroke-width="1.5"/><path d="M0.8 3.3 L3 0.3 L5.2 3.3 Z" fill="#188038"/></svg>65.07%</div>
<div class="a" style="right:322.6px;top:600.9px;font-size:11px;line-height:15px;color:#3c4043;font-weight:400;-webkit-text-stroke-width:0.2px">$1.86</div>
<div class="a" style="right:322.6px;top:629.5px;font-size:11px;line-height:15px;color:#3c4043;font-weight:400;-webkit-text-stroke-width:0.2px">$1.09</div>
<div class="a" style="right:322.6px;top:658.0px;font-size:11px;line-height:15px;color:#3c4043;font-weight:400;-webkit-text-stroke-width:0.2px">70.23%</div>
<div class="a" style="right:217.7px;top:447.2px;font-size:11.2px;line-height:16px;color:#5f6368;font-weight:400;-webkit-text-stroke-width:0.28px"><span style="padding-bottom:3.3px;background:linear-gradient(90deg,#8f959b 62%,transparent 62%) 0 100%/2.6px 1.6px repeat-x">Sessions</span></div>
<div class="a" style="right:217.7px;top:513.7px;font-size:10.9px;line-height:15px;color:#202124;font-weight:400;-webkit-text-stroke-width:0.42px">52,198</div>
<div class="a" style="right:217.7px;top:531.0px;font-size:9.6px;line-height:13px;color:#80868b;font-weight:400;">vs. 28,242</div>
<div class="a" style="right:217.7px;top:546.7px;font-size:9.3px;line-height:13px;color:#188038;font-weight:400;"><svg width="6" height="8" viewBox="0 0 6 8" style="vertical-align:-1px;margin-right:4.5px"><path d="M3 7.6 V2.5" stroke="#188038" stroke-width="1.5"/><path d="M0.8 3.3 L3 0.3 L5.2 3.3 Z" fill="#188038"/></svg>84.82%</div>
<div class="a" style="right:217.7px;top:600.9px;font-size:11px;line-height:15px;color:#3c4043;font-weight:400;-webkit-text-stroke-width:0.2px">43,928 <span style='color:#80868b'>(84.16%)</span></div>
<div class="a" style="right:217.7px;top:629.5px;font-size:11px;line-height:15px;color:#3c4043;font-weight:400;-webkit-text-stroke-width:0.2px">27,215 <span style='color:#80868b'>(96.36%)</span></div>
<div class="a" style="right:217.7px;top:658.0px;font-size:11px;line-height:15px;color:#3c4043;font-weight:400;-webkit-text-stroke-width:0.2px">61.41%</div>
<div class="a" style="right:134.5px;top:447.2px;font-size:11.2px;line-height:16px;color:#5f6368;font-weight:400;-webkit-text-stroke-width:0.28px"><span style="padding-bottom:3.3px;background:linear-gradient(90deg,#8f959b 62%,transparent 62%) 0 100%/2.6px 1.6px repeat-x">Sessions</span></div>
<div class="a" style="right:134.5px;top:462.8px;font-size:11.2px;line-height:16px;color:#5f6368;font-weight:400;-webkit-text-stroke-width:0.28px"><span style="padding-bottom:3.3px;background:linear-gradient(90deg,#8f959b 62%,transparent 62%) 0 100%/2.6px 1.6px repeat-x">per active</span></div>
<div class="a" style="right:134.5px;top:478.3px;font-size:11.2px;line-height:16px;color:#5f6368;font-weight:400;-webkit-text-stroke-width:0.28px"><span style="padding-bottom:3.3px;background:linear-gradient(90deg,#8f959b 62%,transparent 62%) 0 100%/2.6px 1.6px repeat-x">user</span></div>
<div class="a" style="right:134.5px;top:513.7px;font-size:10.9px;line-height:15px;color:#202124;font-weight:400;-webkit-text-stroke-width:0.42px">1.32</div>
<div class="a" style="right:134.5px;top:531.0px;font-size:9.6px;line-height:13px;color:#80868b;font-weight:400;">vs. 1.15</div>
<div class="a" style="right:134.5px;top:546.7px;font-size:9.3px;line-height:13px;color:#188038;font-weight:400;"><svg width="6" height="8" viewBox="0 0 6 8" style="vertical-align:-1px;margin-right:4.5px"><path d="M3 7.6 V2.5" stroke="#188038" stroke-width="1.5"/><path d="M0.8 3.3 L3 0.3 L5.2 3.3 Z" fill="#188038"/></svg>15.4%</div>
<div class="a" style="right:134.5px;top:600.9px;font-size:11px;line-height:15px;color:#3c4043;font-weight:400;-webkit-text-stroke-width:0.2px">1.33</div>
<div class="a" style="right:134.5px;top:629.5px;font-size:11px;line-height:15px;color:#3c4043;font-weight:400;-webkit-text-stroke-width:0.2px">1.14</div>
<div class="a" style="right:134.5px;top:658.0px;font-size:11px;line-height:15px;color:#3c4043;font-weight:400;-webkit-text-stroke-width:0.2px">16.86%</div>
<div class="a" style="right:23.2px;top:447.2px;font-size:11.2px;line-height:16px;color:#5f6368;font-weight:400;-webkit-text-stroke-width:0.28px"><span style="padding-bottom:3.3px;background:linear-gradient(90deg,#8f959b 62%,transparent 62%) 0 100%/2.6px 1.6px repeat-x">Views</span></div>
<div class="a" style="right:23.2px;top:513.7px;font-size:10.9px;line-height:15px;color:#202124;font-weight:400;-webkit-text-stroke-width:0.42px">197,101</div>
<div class="a" style="right:23.2px;top:531.0px;font-size:9.6px;line-height:13px;color:#80868b;font-weight:400;">vs. 49,515</div>
<div class="a" style="right:23.2px;top:546.7px;font-size:9.3px;line-height:13px;color:#188038;font-weight:400;"><svg width="6" height="8" viewBox="0 0 6 8" style="vertical-align:-1px;margin-right:4.5px"><path d="M3 7.6 V2.5" stroke="#188038" stroke-width="1.5"/><path d="M0.8 3.3 L3 0.3 L5.2 3.3 Z" fill="#188038"/></svg>298.06%</div>
<div class="a" style="right:23.2px;top:600.9px;font-size:11px;line-height:15px;color:#3c4043;font-weight:400;-webkit-text-stroke-width:0.2px">158,242 <span style='color:#80868b'>(80.28%)</span></div>
<div class="a" style="right:23.2px;top:629.5px;font-size:11px;line-height:15px;color:#3c4043;font-weight:400;-webkit-text-stroke-width:0.2px">47,328 <span style='color:#80868b'>(95.58%)</span></div>
<div class="a" style="right:23.2px;top:658.0px;font-size:11px;line-height:15px;color:#3c4043;font-weight:400;-webkit-text-stroke-width:0.2px">234.35%</div>
<svg class="a" style="left:662px;top:449px" width="11" height="13" viewBox="0 0 11 13"><path d="M5.5 1 V11.5 M1.5 7.5 L5.5 11.5 L9.5 7.5" fill="none" stroke="#5f6368" stroke-width="1.4"/></svg>
<div class="a" style="left:201px;top:572.1px;font-size:11px;line-height:15px;color:#3c4043;font-weight:400;">1</div>
<div class="a" style="left:232.8px;top:571.6px;font-size:11.2px;line-height:16px;color:#3c4043;font-weight:400;-webkit-text-stroke-width:0.4px">google / organic</div>
<div class="a" style="left:232.8px;top:600.9px;font-size:11px;line-height:15px;color:#3c4043;font-weight:400;-webkit-text-stroke-width:0.4px">Jan 1 - Mar 31, 2025</div>
<div class="a" style="left:232.8px;top:629.5px;font-size:11px;line-height:15px;color:#3c4043;font-weight:400;-webkit-text-stroke-width:0.4px">Jan 1 - Mar 31, 2024</div>
<div class="a" style="left:232.8px;top:658.0px;font-size:11px;line-height:15px;color:#3c4043;font-weight:400;-webkit-text-stroke-width:0.4px">% change</div>
<div class="a" style="left:445.2px;top:495.1px;width:78.6px;height:71.1px;border:3px solid #fa0000;border-radius:2px"></div>
<div class="a" style="left:562.6px;top:502.9px;width:59.1px;height:71.4px;border:3px solid #fa0000;border-radius:2px"></div>
<div class="a" style="left:663.3px;top:494.2px;width:91.7px;height:79.2px;border:3px solid #fa0000;border-radius:2px"></div>
<svg class="a" style="left:0;top:0" width="1220" height="686" viewBox="0 0 1220 686"><g fill="#e8000b" stroke="#e8000b" stroke-width="0.8" stroke-linejoin="round"><path d="M1002.3 559.9 L1016.9 563.5 L1015.5 565.8 L1020.2 568.5 L1018.6 571.3 L1013.9 568.5 L1012.5 570.8 Z"/><path d="M1181.4 558.6 L1195.4 563.1 L1193.9 565.1 L1200.5 569.1 L1198.5 571.9 L1192 567.9 L1190.5 569.9 Z"/></g></svg>
</body></html>
